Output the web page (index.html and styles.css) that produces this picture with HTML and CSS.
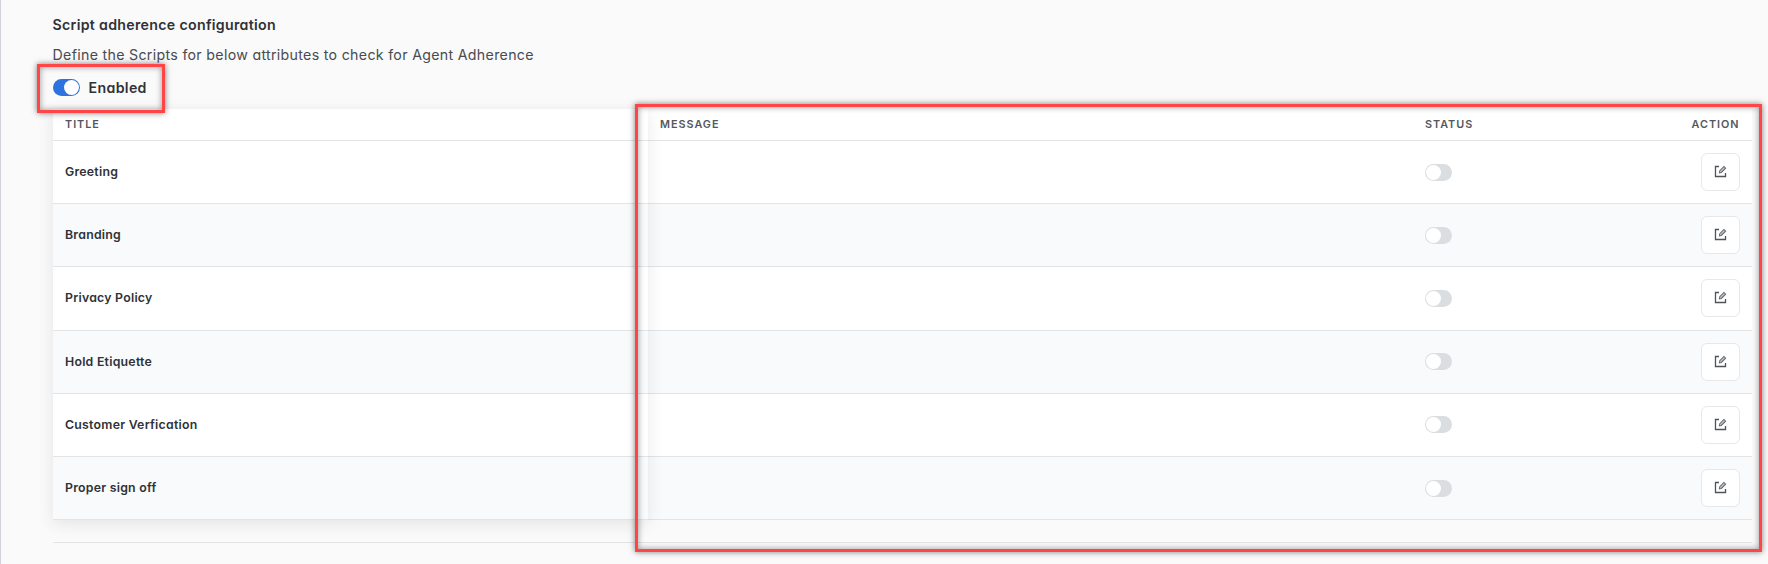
FILE: index.html
```
<!DOCTYPE html>
<html lang="en">
<head>
<meta charset="utf-8">
<title>Script adherence configuration</title>
<link rel="stylesheet" href="styles.css">
</head>
<body>
<svg class="sprite" aria-hidden="true">
  <symbol id="edit" viewBox="0 0 14 14">
    <path d="M5.4 1.6H1.6V12.4H12.4V8.6" fill="none" stroke="#505358" stroke-width="1.4"/>
    <path d="M5.8 8.4L6.2 6.2L10.7 1.6L12.5 3.4L7.9 8Z" fill="#c3c5c9" stroke="#66696e" stroke-width="1.1"/>
  </symbol>
</svg>
<main class="page">
  <h1 class="heading">Script adherence configuration</h1>
  <p class="description">Define the Scripts for below attributes to check for Agent Adherence</p>
  <div class="enable"><span class="toggle on"></span><span class="enable-label">Enabled</span></div>
  <section class="table">
    <div class="titles">
      <div class="head"><span>TITLE</span></div>
      <div class="row"><span>Greeting</span></div>
      <div class="row alt"><span>Branding</span></div>
      <div class="row"><span>Privacy Policy</span></div>
      <div class="row alt"><span>Hold Etiquette</span></div>
      <div class="row"><span>Customer Verfication</span></div>
      <div class="row alt"><span>Proper sign off</span></div>
    </div>
    <div class="details">
      <div class="head cols"><span>MESSAGE</span><span>STATUS</span><span>ACTION</span></div>
      <div class="row cols"><span></span><span class="toggle"></span><button class="edit" aria-label="Edit"><svg class="icon"><use href="#edit"/></svg></button></div>
      <div class="row alt cols"><span></span><span class="toggle"></span><button class="edit" aria-label="Edit"><svg class="icon"><use href="#edit"/></svg></button></div>
      <div class="row cols"><span></span><span class="toggle"></span><button class="edit" aria-label="Edit"><svg class="icon"><use href="#edit"/></svg></button></div>
      <div class="row alt cols"><span></span><span class="toggle"></span><button class="edit" aria-label="Edit"><svg class="icon"><use href="#edit"/></svg></button></div>
      <div class="row cols"><span></span><span class="toggle"></span><button class="edit" aria-label="Edit"><svg class="icon"><use href="#edit"/></svg></button></div>
      <div class="row alt cols"><span></span><span class="toggle"></span><button class="edit" aria-label="Edit"><svg class="icon"><use href="#edit"/></svg></button></div>
    </div>
  </section>
  <hr class="rule">
  <div class="mark mark-enable"></div>
  <div class="mark mark-details"></div>
</main>
</body>
</html>
```
FILE: styles.css
```
* { box-sizing: border-box; }
body { margin: 0; background: #fafafa; color: #2f3237; font-family: Inter, "Liberation Sans", sans-serif; font-feature-settings: "cv11" 1; }
.sprite { position: absolute; width: 0; height: 0; }
.page { position: relative; width: 1768px; height: 564px; padding: 15px 16px 0 51.5px; border-left: 1px solid #d2d2da; overflow: hidden; }
.heading { margin: 0; height: 20px; line-height: 20px; font-size: 14.2px; font-weight: 600; letter-spacing: .3px; white-space: nowrap; }
.description { margin: 10px 0 0; height: 20px; line-height: 20px; font-size: 14.2px; letter-spacing: .31px; color: #484b50; white-space: nowrap; }
.enable { display: flex; align-items: center; gap: 9px; height: 23px; margin-top: 11px; }
.enable-label { font-size: 14.2px; font-weight: 600; letter-spacing: .34px; line-height: 23px; }
.toggle { display: block; width: 27px; height: 17px; border-radius: 9px; background: #dadee1; padding: 1px; }
.toggle::before { content: ""; display: block; width: 15px; height: 15px; border-radius: 50%; background: #fff; }
.toggle.on { background: #2c73e0; }
.toggle.on::before { margin-left: 10px; }
.table { display: grid; grid-template-columns: 595.5px 1104px; margin-top: 10px; }
.titles { position: relative; z-index: 1; box-shadow: 0 4px 16px rgba(0, 0, 0, .09); }
.head { display: flex; align-items: center; height: 32px; padding: 0 12.5px; background: #fff; border-bottom: 1px solid #e2e4e6; font-size: 10.8px; font-weight: 600; color: #54575c; letter-spacing: 1px; }
.row { display: flex; align-items: center; height: 63.2px; padding: 0 12.5px 1px; background: #fff; border-bottom: 1px solid #e2e4e6; font-size: 12.3px; font-weight: 600; letter-spacing: .25px; white-space: nowrap; }
.alt { background: #f8fafc; }
.cols { display: grid; grid-template-columns: 765px 1fr auto; padding: 0 12.5px 0 12px; }
.edit { display: flex; align-items: center; justify-content: center; width: 39px; height: 38px; padding: 0 0 1px 1px; background: #fff; border: 1px solid #e6e8ea; border-radius: 6px; }
.icon { width: 13px; height: 13px; }
.rule { margin: 22px 0 0; border: 0; height: 1px; background: #e3e4e6; width: 1699px; }
.mark { position: absolute; z-index: 2; border: 3px solid #ff4545; box-shadow: 0 0 6px rgba(0, 0, 0, .5), inset 0 0 6px rgba(0, 0, 0, .4); }
.mark-enable { left: 36px; top: 64px; width: 128px; height: 49px; }
.mark-details { left: 634px; top: 104px; width: 1127px; height: 448px; }
```
